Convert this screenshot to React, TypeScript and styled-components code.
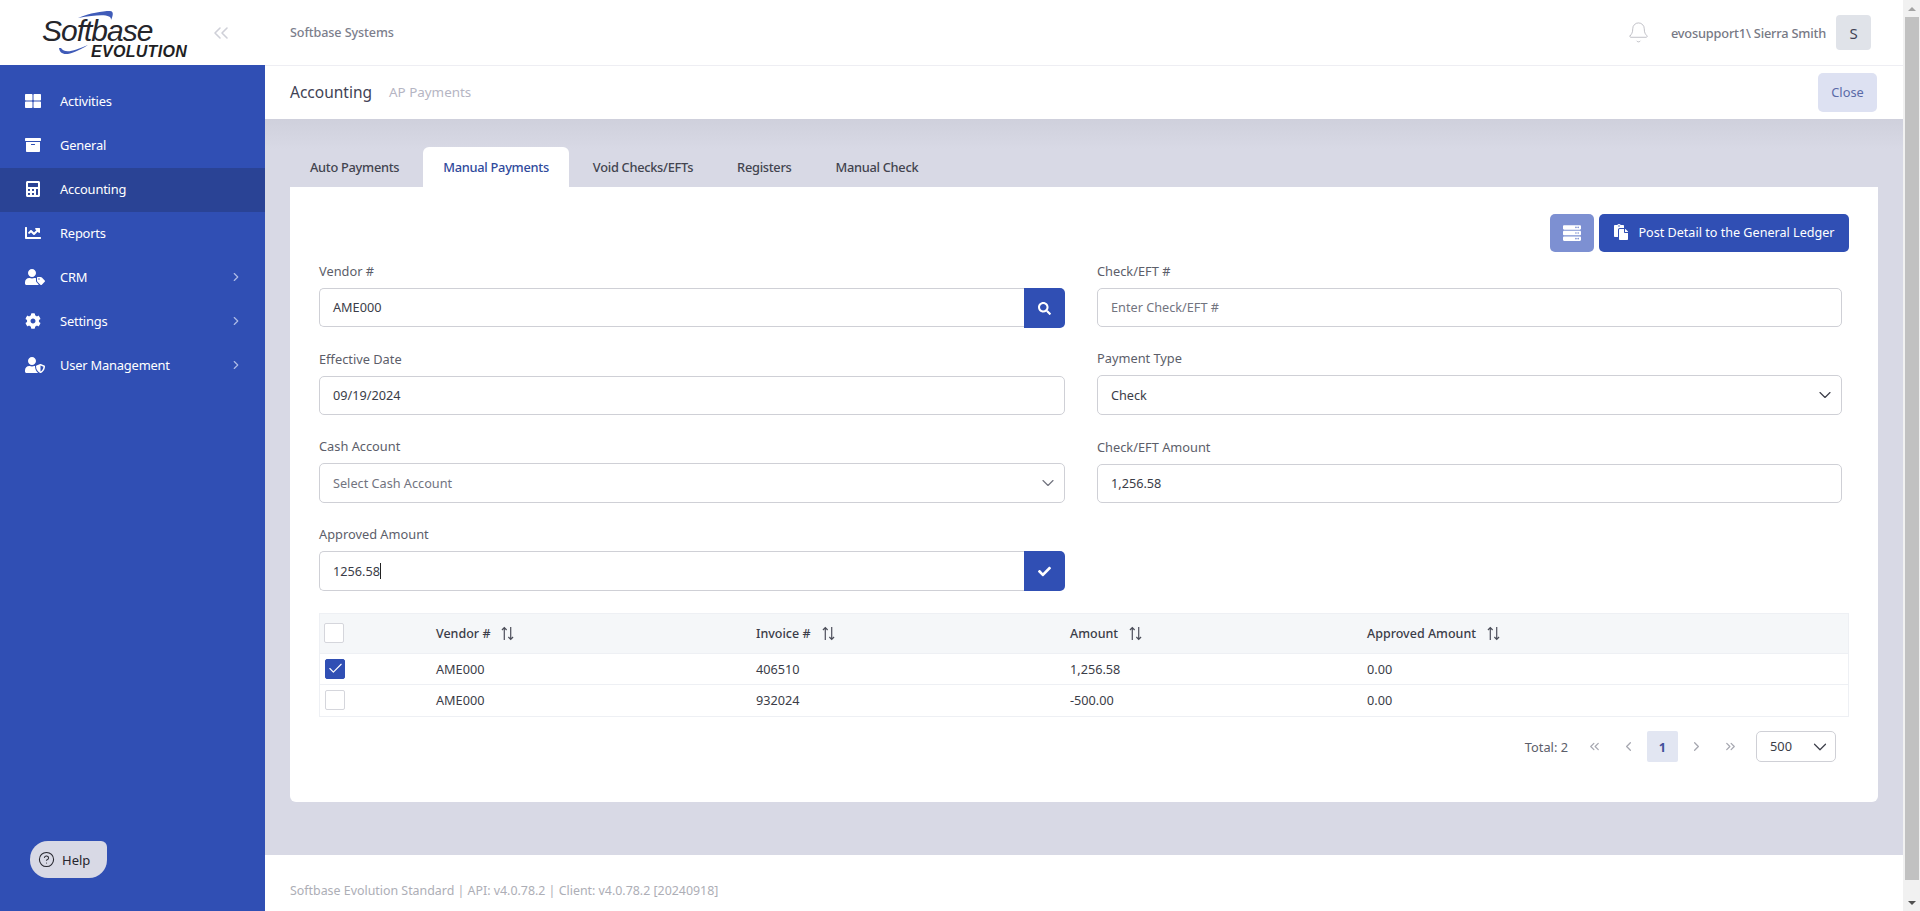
import React from "react";
import styled, { createGlobalStyle } from "styled-components";
import { FaThLarge, FaArchive, FaCalculator, FaChartLine, FaUserTag, FaCog, FaUserShield, FaServer, FaPaste, FaSearch, FaCheck } from "react-icons/fa";
import { Bell, Check, ChevronDown, ChevronLeft, ChevronRight, ChevronsLeft, ChevronsRight, CircleHelp } from "lucide-react";

const FONT = `"Noto Sans", "Open Sans", sans-serif`;
const BLUE = "#304fb4";

const Global = createGlobalStyle`
  html, body { margin: 0; height: 100%; overflow: hidden; }
  body { font-family: ${FONT}; font-size: 13px; color: #3f4254; background: #fff; }
  #root { height: 100%; }
  * { box-sizing: border-box; }
`;

const Shell = styled.div`display: flex; height: 911px; width: 1920px;`;

const Sidebar = styled.aside`
  width: 265px; flex: none; background: ${BLUE}; display: flex; flex-direction: column; position: relative;
`;
const Brand = styled.div`
  height: 65px; background: #fff; display: flex; align-items: center; justify-content: space-between; padding: 0 32px 0 42px;
`;
const Logo = styled.div`position: relative; width: 148px; height: 50px; color: #222;`;
const LogoMain = styled.span`
  position: absolute; left: 0; top: 10px; font: italic 400 30px/26px "Liberation Sans", sans-serif; letter-spacing: -1px; color: #25252b;
`;
const LogoSub = styled.span`
  position: absolute; right: 3px; top: 36px; font: italic 700 16px/16px "Liberation Sans", sans-serif; letter-spacing: .3px; color: #1f1f24;
`;
const Swoosh = styled.svg`position: absolute; left: 0; top: 0; width: 148px; height: 60px;`;
const Collapse = styled.span`color: #cfd0d8; display: flex;`;

const Menu = styled.nav`padding-top: 15px; display: flex; flex-direction: column;`;
const MenuItem = styled.div<{ $active?: boolean }>`
  height: 44px; display: flex; align-items: center; padding: 0 22px 2px 25px; color: #fff; font-size: 12.9px; letter-spacing: -0.2px;
  background: ${(p) => (p.$active ? "#2a4395" : "transparent")};
`;
const MenuIcon = styled.span`width: 35px; flex: none; display: flex; align-items: center; font-size: 16px;`;
const MenuLabel = styled.span`flex: 1;`;
const MenuArrow = styled.span`display: flex; color: #aebbe6;`;

const HelpButton = styled.button`
  position: absolute; left: 30px; bottom: 33px; width: 77px; height: 37px; border: 0; border-radius: 18px 6px 18px 18px;
  background: #d8d9e5; color: #26262e; font: 400 13px ${FONT}; display: flex; align-items: center; gap: 7px; padding: 0 0 0 8px;
`;

const Main = styled.main`flex: 1; min-width: 0; display: flex; flex-direction: column;`;
const TopBar = styled.header`
  height: 66px; flex: none; border-bottom: 1px solid #eeeef3; display: flex; align-items: center; padding: 0 32px 0 25px; background: #fff;
`;
const Company = styled.span`flex: 1; color: #7c7e8c; font-size: 12.6px; font-weight: 500; letter-spacing: -0.1px;`;
const BellWrap = styled.span`display: flex; color: #a3a4ad; margin-right: 21px;`;
const UserName = styled.span`color: #777985; font-size: 12.8px; font-weight: 500; letter-spacing: -0.2px; margin-right: 10px;`;
const Avatar = styled.span`
  width: 35px; height: 35px; border-radius: 4px; background: #e0e3e9; color: #3f4254; display: flex; align-items: center; justify-content: center; font-size: 15px;
`;
const SubBar = styled.div`
  height: 53px; flex: none; display: flex; align-items: center; padding: 0 26px 0 25px; background: #fff;
`;
const Title = styled.span`font-size: 15.5px; color: #3f4254; margin: -2px 17px 0 0;`;
const Crumb = styled.span`flex: 1; color: #b5b5c3; font-size: 13.4px; margin-top: -2px;`;
const CloseBtn = styled.button`
  width: 59px; height: 39px; border: 0; border-radius: 5px; background: #dde1f2; color: #5a6aa8; font: 400 12.8px ${FONT}; padding: 0 0 2px;
`;

const Content = styled.div`
  flex: 1; background: linear-gradient(#cfd0dc, #d8d9e5 30px, #d8d9e5); padding: 28px 25px 53px;
`;
const Tabs = styled.div`display: flex; height: 40px;`;
const Tab = styled.div<{ $active?: boolean }>`
  height: 40px; padding: 0 20px; margin-right: 4px; display: flex; align-items: center; font-size: 12.8px; font-weight: 500; letter-spacing: -0.28px;
  border-radius: 6px 6px 0 0; background: ${(p) => (p.$active ? "#fff" : "transparent")}; color: ${(p) => (p.$active ? "#304a9c" : "#42444f")};
`;
const Card = styled.section`
  background: #fff; border-radius: 0 0 6px 6px; height: 615px; padding: 27px 29px 0 29px; display: flex; flex-direction: column;
`;
const Actions = styled.div`display: flex; justify-content: flex-end; gap: 5px; height: 38px;`;
const IconBtn = styled.button`
  width: 44px; height: 38px; border: 0; border-radius: 5px; background: #7d90d2; color: #fff; display: flex; align-items: center; justify-content: center; font-size: 18px; padding: 0;
`;
const PrimaryBtn = styled.button`
  width: 250px; height: 38px; border: 0; border-radius: 5px; background: ${BLUE}; color: #fff; display: flex; align-items: center; justify-content: center; gap: 9px; font: 400 12.6px ${FONT}; padding: 0 0 2px; svg { font-size: 16px; }
`;
const FormGrid = styled.div`
  display: grid; grid-template-columns: 746px 745px; column-gap: 32px; margin-top: 9px;
`;
const Col = styled.div`display: flex; flex-direction: column;`;
const Field = styled.div<{ $h: number }>`height: ${(p) => p.$h}px; display: flex; flex-direction: column;`;
const Label = styled.label`
  height: 20px; line-height: 20px; margin: 0 0 7px; color: #5c5e6a; font-size: 12.8px;
`;
const InputRow = styled.div`display: flex; height: 40px;`;
const Control = styled.div<{ $joined?: boolean; $muted?: boolean; $h?: number }>`
  flex: 1; height: ${(p) => p.$h ?? 39}px; border: 1px solid #cfd0d6; border-radius: ${(p) => (p.$joined ? "5px 0 0 5px" : "5px")};
  ${(p) => p.$joined && "border-right: 0;"}
  display: flex; align-items: center; justify-content: space-between; padding: 0 6px ${(p) => (p.$h ? 1 : 2)}px 13px; font-size: 12.7px;
  color: ${(p) => (p.$muted ? "#72747f" : "#3b3d48")}; background: #fff;
  svg { margin-top: 1px; }
`;
const Caret = styled.span`display: inline-block; width: 1px; height: 16px; background: #222; vertical-align: -3px;`;
const AddOn = styled.button`
  width: 41px; height: 40px; border: 0; border-radius: 0 5px 5px 0; background: ${BLUE}; color: #fff; display: flex; align-items: center; justify-content: center; padding: 0; font-size: 13px; flex: none;
`;

const Table = styled.div`border: 1px solid #eef0f4;`;
const Row = styled.div<{ $head?: boolean }>`
  display: grid; grid-template-columns: 116px 320px 314px 297px 1fr; align-items: center; height: ${(p) => (p.$head ? "40px" : "31px")};
  background: ${(p) => (p.$head ? "#f5f7f9" : "#fff")}; border-bottom: 1px solid #eef0f4; color: #3b3d48; font-size: ${(p) => (p.$head ? "12.5px" : "12.7px")}; font-weight: ${(p) => (p.$head ? 500 : 400)};
  padding-bottom: 1px;
  &:last-child { border-bottom: 0; }
`;
const Cell = styled.div`display: flex; align-items: center; gap: 10px;`;
const Box = styled.span<{ $on?: boolean; $head?: boolean }>`
  width: 20px; height: 20px; margin-left: ${(p) => (p.$head ? 4 : 5)}px; border-radius: 2px; border: 1px solid ${(p) => (p.$on ? BLUE : "#d5d6dc")};
  background: ${(p) => (p.$on ? BLUE : "#fff")}; color: #fff; display: flex; align-items: center; justify-content: center;
`;
const SortIcon = styled.svg`width: 15px; height: 15px; color: #4a4c58; flex: none;`;

const Pager = styled.div`
  display: flex; align-items: center; justify-content: flex-end; height: 31px; margin-top: 14px; padding-right: 13px; color: #5c5e6a; font-size: 12.8px;
`;
const Total = styled.span`margin-right: 8px;`;
const PageBtn = styled.span<{ $active?: boolean }>`
  width: 31px; height: 31px; margin-left: 3px; border-radius: 2px; display: flex; align-items: center; justify-content: center;
  background: ${(p) => (p.$active ? "#e2e6f2" : "transparent")}; color: ${(p) => (p.$active ? "#43519b" : "#a6a7b0")}; font-weight: ${(p) => (p.$active ? 700 : 400)};
`;
const PageSize = styled.div`
  width: 80px; height: 31px; margin-left: 10px; border: 1px solid #cfd0d6; border-radius: 5px; display: flex; align-items: center; justify-content: space-between; padding: 0 4px 2px 13px; color: #3b3d48;
  svg { margin-top: 2px; }
`;

const Footer = styled.footer`
  height: 56px; flex: none; display: flex; align-items: center; padding: 14px 25px 0; background: #fff; color: #adaeb6; font-size: 12.4px;
`;

const Scroll = styled.div`width: 17px; flex: none; background: #f1f1f1; display: flex; flex-direction: column; align-items: center;`;
const ScrollEnd = styled.span<{ $down?: boolean }>`
  height: 17px; flex: none; width: 100%; display: flex; align-items: center; justify-content: center; font-size: 0;
  &::before { content: ""; border-left: 4px solid transparent; border-right: 4px solid transparent;
    ${(p) => (p.$down ? "border-top: 4px solid #505050;" : "border-bottom: 4px solid #a3a3a3;")} }
`;
const ScrollThumb = styled.div`width: 14px; flex: 1; background: #c1c1c1; margin-bottom: 14px;`;

const Sort = () => (
  <SortIcon viewBox="0 0 14 14" fill="none" stroke="currentColor" strokeWidth="1.1">
    <path d="M4 13V1.5M1.8 3.7 4 1.5l2.2 2.2" />
    <path d="M10 1v11.5M7.8 10.3l2.2 2.2 2.2-2.2" />
  </SortIcon>
);

const menu = [
  { label: "Activities", icon: <FaThLarge /> },
  { label: "General", icon: <FaArchive /> },
  { label: "Accounting", icon: <FaCalculator />, active: true },
  { label: "Reports", icon: <FaChartLine /> },
  { label: "CRM", icon: <FaUserTag size={20} />, more: true },
  { label: "Settings", icon: <FaCog />, more: true },
  { label: "User Management", icon: <FaUserShield size={20} />, more: true },
];

const rows = [
  { on: true, vendor: "AME000", inv: "406510", amt: "1,256.58", app: "0.00" },
  { on: false, vendor: "AME000", inv: "932024", amt: "-500.00", app: "0.00" },
];

export default function App() {
  return (
    <>
      <Global />
      <Shell>
        <Sidebar>
          <Brand>
            <Logo>
              <LogoMain>Softbase</LogoMain>
              <LogoSub>EVOLUTION</LogoSub>
              <Swoosh viewBox="0 0 148 60" fill="none">
                <path d="M36 10C48 5 60 3 68 3c3 0 4 3 1 9C70 6 58 6 36 10Z" fill="#3f5bb8" />
                <path d="M17 40c1 8 10 9 29-3C32 43 23 46 19 40Z" fill="#3f5bb8" />
              </Swoosh>
            </Logo>
            <Collapse><ChevronsLeft size={24} strokeWidth={1.6} /></Collapse>
          </Brand>
          <Menu>
            {menu.map((m) => (
              <MenuItem key={m.label} $active={m.active}>
                <MenuIcon>{m.icon}</MenuIcon>
                <MenuLabel>{m.label}</MenuLabel>
                {m.more && <MenuArrow><ChevronRight size={14} /></MenuArrow>}
              </MenuItem>
            ))}
          </Menu>
          <HelpButton><CircleHelp size={17} strokeWidth={1.5} />Help</HelpButton>
        </Sidebar>
        <Main>
          <TopBar>
            <Company>Softbase Systems</Company>
            <BellWrap><Bell size={23} strokeWidth={0.7} /></BellWrap>
            <UserName>evosupport1\ Sierra Smith</UserName>
            <Avatar>S</Avatar>
          </TopBar>
          <SubBar>
            <Title>Accounting</Title>
            <Crumb>AP Payments</Crumb>
            <CloseBtn>Close</CloseBtn>
          </SubBar>
          <Content>
            <Tabs>
              <Tab>Auto Payments</Tab>
              <Tab $active>Manual Payments</Tab>
              <Tab>Void Checks/EFTs</Tab>
              <Tab>Registers</Tab>
              <Tab>Manual Check</Tab>
            </Tabs>
            <Card>
              <Actions>
                <IconBtn aria-label="Layout"><FaServer /></IconBtn>
                <PrimaryBtn><FaPaste />Post Detail to the General Ledger</PrimaryBtn>
              </Actions>
              <FormGrid>
                <Col>
                  <Field $h={88}>
                    <Label>Vendor #</Label>
                    <InputRow>
                      <Control $joined>AME000</Control>
                      <AddOn aria-label="Search"><FaSearch /></AddOn>
                    </InputRow>
                  </Field>
                  <Field $h={87}>
                    <Label>Effective Date</Label>
                    <InputRow><Control>09/19/2024</Control></InputRow>
                  </Field>
                  <Field $h={88}>
                    <Label>Cash Account</Label>
                    <InputRow><Control $muted $h={40}>Select Cash Account<ChevronDown size={20} strokeWidth={1.4} /></Control></InputRow>
                  </Field>
                  <Field $h={89}>
                    <Label>Approved Amount</Label>
                    <InputRow>
                      <Control $joined $h={40}><span>1256.58<Caret /></span></Control>
                      <AddOn aria-label="Confirm"><FaCheck /></AddOn>
                    </InputRow>
                  </Field>
                </Col>
                <Col>
                  <Field $h={87}>
                    <Label>Check/EFT #</Label>
                    <InputRow><Control $muted>Enter Check/EFT #</Control></InputRow>
                  </Field>
                  <Field $h={89}>
                    <Label>Payment Type</Label>
                    <InputRow><Control $h={40}>Check<ChevronDown size={20} strokeWidth={1.4} /></Control></InputRow>
                  </Field>
                  <Field $h={87}>
                    <Label>Check/EFT Amount</Label>
                    <InputRow><Control>1,256.58</Control></InputRow>
                  </Field>
                </Col>
              </FormGrid>
              <Table>
                <Row $head>
                  <Cell><Box $head /></Cell>
                  <Cell>Vendor #<Sort /></Cell>
                  <Cell>Invoice #<Sort /></Cell>
                  <Cell>Amount<Sort /></Cell>
                  <Cell>Approved Amount<Sort /></Cell>
                </Row>
                {rows.map((r) => (
                  <Row key={r.inv}>
                    <Cell><Box $on={r.on}>{r.on && <Check size={17} strokeWidth={1.6} />}</Box></Cell>
                    <Cell>{r.vendor}</Cell>
                    <Cell>{r.inv}</Cell>
                    <Cell>{r.amt}</Cell>
                    <Cell>{r.app}</Cell>
                  </Row>
                ))}
              </Table>
              <Pager>
                <Total>Total: 2</Total>
                <PageBtn><ChevronsLeft size={15} /></PageBtn>
                <PageBtn><ChevronLeft size={15} /></PageBtn>
                <PageBtn $active>1</PageBtn>
                <PageBtn><ChevronRight size={15} /></PageBtn>
                <PageBtn><ChevronsRight size={15} /></PageBtn>
                <PageSize>500<ChevronDown size={22} strokeWidth={1.3} /></PageSize>
              </Pager>
            </Card>
          </Content>
          <Footer>Softbase Evolution Standard | API: v4.0.78.2 | Client: v4.0.78.2 [20240918]</Footer>
        </Main>
        <Scroll>
          <ScrollEnd />
          <ScrollThumb />
          <ScrollEnd $down />
        </Scroll>
      </Shell>
    </>
  );
}
